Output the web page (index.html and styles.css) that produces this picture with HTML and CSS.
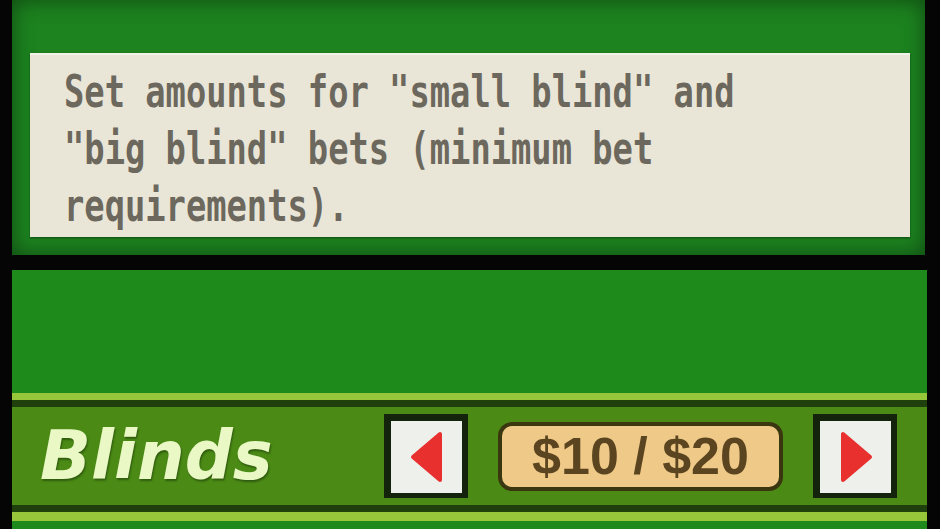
FILE: index.html
```html
<!DOCTYPE html>
<html lang="en">
<head>
    <meta charset="UTF-8">
    <title>Table Rules - Blinds</title>
    <link rel="stylesheet" href="styles.css">
</head>
<body>

    <!-- Top screen: help text -->
    <div class="screen-top">
        <div class="help-box">
            <p class="help-text">Set amounts for "small blind" and<br>"big blind" bets (minimum bet<br>requirements).</p>
        </div>
    </div>

    <!-- Bottom screen: settings -->
    <div class="screen-bottom">
        <div class="spacer"></div>

        <div class="option">
            <div class="option-row">
                <span class="option-label">Blinds</span>
                <div class="picker">
                    <button class="arrow-btn">
                        <svg width="36" height="52" viewBox="0 0 36 52">
                            <polygon points="31,3 31,49 4,26" fill="#e8312f" stroke="#e8312f" stroke-width="4" stroke-linejoin="round"/>
                        </svg>
                    </button>
                    <div class="value-pill">$10 / $20</div>
                    <button class="arrow-btn">
                        <svg width="36" height="52" viewBox="0 0 36 52">
                            <polygon points="5,3 5,49 32,26" fill="#e8312f" stroke="#e8312f" stroke-width="4" stroke-linejoin="round"/>
                        </svg>
                    </button>
                </div>
            </div>
        </div>

        <div class="spacer-bottom"></div>
    </div>

</body>
</html>
```

FILE: styles.css
```css
/* General reset */
* {
    margin: 0;
    padding: 0;
    box-sizing: border-box;
}

body {
    width: 940px;
    height: 529px;
    overflow: hidden;
    background-color: #050505;
    font-family: "DejaVu Sans", sans-serif;
}

/* Top screen */
.screen-top {
    margin-left: 12px;
    width: 913px;
    height: 255px;
    padding: 53px 15px 0 18px;
    background-color: #1c831f;
    box-shadow: inset 0 0 22px rgba(0, 0, 0, 0.45);
}

.help-box {
    height: 184px;
    padding: 8px 0 0 34px;
    background-color: #e9e6d8;
    border-top: 2px solid #f4f2e8;
    box-shadow: 0 1px 2px rgba(0, 0, 0, 0.4);
}

.help-text {
    font-family: "DejaVu Sans Mono", monospace;
    font-size: 45px;
    font-weight: bold;
    line-height: 57px;
    color: #6c685d;
    white-space: nowrap;
    transform: scaleX(0.75);
    transform-origin: left top;
}

/* Bottom screen */
.screen-bottom {
    margin-top: 15px;
    margin-left: 12px;
    width: 915px;
    height: 259px;
    display: flex;
    flex-direction: column;
    background-color: #1f8a1c;
}

.spacer {
    height: 123px;
}

.spacer-bottom {
    flex: 1;
}

/* Option row */
.option {
    border-top: 7px solid #97c63a;
    border-bottom: 9px solid #97c63a;
}

.option-row {
    height: 112px;
    display: flex;
    align-items: center;
    padding-left: 28px;
    background-color: #4b8b15;
    border-top: 7px solid #1f3f0c;
    border-bottom: 7px solid #1f3f0c;
}

.option-label {
    font-size: 67px;
    font-weight: bold;
    font-style: italic;
    color: #e9f8c4;
    text-shadow: 1px 2px 2px rgba(30, 60, 10, 0.6);
}

.picker {
    margin-left: auto;
    padding-right: 30px;
    display: flex;
    align-items: center;
    gap: 30px;
}

.arrow-btn {
    width: 84px;
    height: 84px;
    display: flex;
    align-items: center;
    justify-content: center;
    background-color: #eef0ec;
    border: 7px solid #14240c;
    border-bottom-width: 5px;
    border-right-width: 6px;
}

.value-pill {
    width: 285px;
    height: 69px;
    display: flex;
    align-items: center;
    justify-content: center;
    background-color: #efc987;
    border: 4px solid #3a3710;
    border-radius: 14px;
    font-family: "Liberation Sans", Arial, sans-serif;
    font-size: 52px;
    font-weight: bold;
    color: #5b4520;
}
```
